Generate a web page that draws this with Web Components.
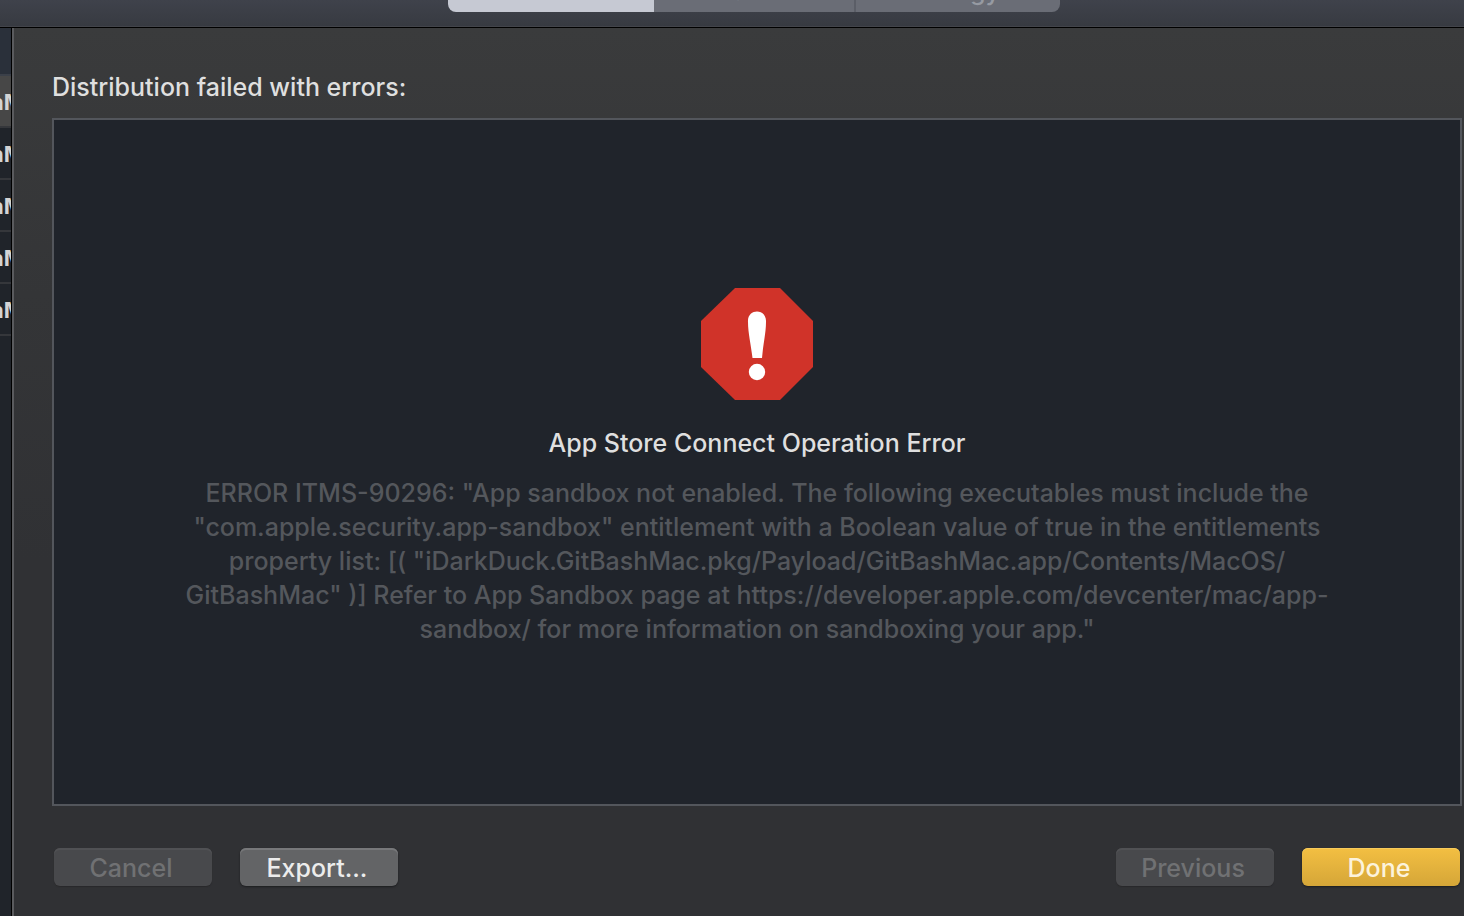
<!DOCTYPE html>
<html lang="en">
<head>
<meta charset="utf-8">
<title>Organizer</title>
<style>
  html, body { margin: 0; }
  body { background: #303134; color: #dfdfdf; font: 500 25px/34px Inter, "Liberation Sans", sans-serif; }
</style>
</head>
<body>
<organizer-window></organizer-window>
<script>
  const define = (name, html) => customElements.define(name, class extends HTMLElement {
    constructor() {
      super();
      const t = document.createElement('template');
      t.innerHTML = html;
      this.attachShadow({ mode: 'open' }).append(t.content.cloneNode(true));
    }
  });

  customElements.define('push-button', class extends HTMLElement {
    connectedCallback() {
      const root = this.attachShadow({ mode: 'open' });
      root.innerHTML = `
        <style>
          :host { display: block; }
          button {
            display: block; width: 158px; height: 38px; padding: 2px 4px 0 0; border: 0; border-radius: 6px;
            font: inherit; line-height: 36px; color: #ececec;
            background: #636466;
            box-shadow: inset 0 2px 0 #77787a, 0 1px 2px #1c1d1f;
          }
          button:disabled { color: #707173; background: #48494c; box-shadow: inset 0 2px 0 #505154, 0 1px 1px #29292b; }
          :host([primary]) button {
            color: #fcf3dc; background: linear-gradient(#f3bf42, #d5a638);
            box-shadow: inset 0 1px 0 #f7cb5b, 0 1px 2px #1c1d1f;
          }
        </style>
        <button type="button"><slot></slot></button>`;
      root.querySelector('button').disabled = this.hasAttribute('disabled');
    }
  });

  define('segmented-tabs', `
    <style>
      :host { display: flex; width: 612px; height: 44px; flex: none; border-radius: 8px; overflow: hidden; }
      button {
        flex: 1; padding: 9px 0 7px; border: 0;
        font: inherit; line-height: 28px; color: #969aa2; background: #6a6d76;
      }
      button.side { flex: none; width: 206px; }
      button.selected { color: #a9abb3; background: #c6c9d3; }
      button.divided { border-left: 2px solid #5b5e67; }
    </style>
    <button type="button" class="side selected">Archives</button>
    <button type="button">Crashes</button>
    <button type="button" class="side divided">Energy</button>`);

  define('window-toolbar', `
    <style>
      :host {
        display: flex; box-sizing: border-box; height: 28px; padding: 0 0 14px; overflow: hidden;
        justify-content: center; align-items: flex-end;
        background: linear-gradient(#3f424b, #373a41); border-bottom: 1px solid #000;
        box-shadow: inset 0 -1px 0 #42444a;
      }
      segmented-tabs { margin: 0 0 1px 44px; }
    </style>
    <segmented-tabs></segmented-tabs>`);

  define('archive-row', `
    <style>
      :host {
        display: block; box-sizing: border-box; height: 52px; border-bottom: 2px solid #35373b; overflow: hidden;
        font-weight: 700; font-size: 22px; line-height: 52px; text-indent: -10px; white-space: nowrap; color: #d4d4d4;
      }
      :host([selected]) { background: #474747; }
    </style>
    <slot></slot>`);

  define('archive-list', `
    <style>
      :host { display: block; width: 11px; flex: none; overflow: hidden; background: #20242a; border-right: 1px solid #000; }
      header { height: 46px; background: #2a303a; border-bottom: 2px solid #3b4049; }
    </style>
    <header></header>
    <archive-row selected>hM</archive-row>
    <archive-row>hM</archive-row>
    <archive-row>hM</archive-row>
    <archive-row>hM</archive-row>
    <archive-row>hM</archive-row>`);

  define('error-report', `
    <style>
      :host {
        display: flex; flex: 1; flex-direction: column; align-items: center; justify-content: center;
        padding-top: 10px; text-align: center; background: #20242b; border: 2px solid #53565c;
      }
      svg { display: block; width: 112px; height: 112px; }
      h2 { margin: 26px 0 16px; font: inherit; }
      p { margin: 0; color: #54575c; }
    </style>
    <svg viewBox="0 0 112 112" role="img" aria-label="Error">
      <path fill="#d03329" d="M34 0H79L112 33V79L79 112H34L0 79V33Z"/>
      <path fill="#fff" d="M47 34C46 20 66 20 65 34C65 45 62 57 61 70H51.500C50 57 47 45 47 34Z"/>
      <circle fill="#fff" cx="56" cy="84" r="8.200"/>
    </svg>
    <h2><slot name="title"></slot></h2>
    <p><slot></slot></p>`);

  define('distribution-sheet', `
    <style>
      :host {
        display: flex; flex: 1; flex-direction: column; box-sizing: border-box;
        padding: 42px 2px 30px 38px; border-left: 2px solid #5a5b5e;
        background: linear-gradient(#3a3b3c, #343537 30%, #303134 60%, #303134);
      }
      h1 { margin: 0 0 14px; font: inherit; }
      footer { display: flex; gap: 28px; margin: 42px 2px 0; }
      .spacer { flex: 1; }
    </style>
    <h1>Distribution failed with errors:</h1>
    <error-report>
      <span slot="title">App Store Connect Operation Error</span>
      ERROR ITMS-90296: "App sandbox not enabled. The following executables must include the<br>
      "com.apple.security.app-sandbox" entitlement with a Boolean value of true in the entitlements<br>
      property list: [( "iDarkDuck.GitBashMac.pkg/Payload/GitBashMac.app/Contents/MacOS/<br>
      GitBashMac" )] Refer to App Sandbox page at https://developer.apple.com/devcenter/mac/app-<br>
      sandbox/ for more information on sandboxing your app."
    </error-report>
    <footer>
      <push-button disabled>Cancel</push-button>
      <push-button>Export...</push-button>
      <div class="spacer"></div>
      <push-button disabled>Previous</push-button>
      <push-button primary>Done</push-button>
    </footer>`);

  define('organizer-window', `
    <style>
      :host { display: flex; flex-direction: column; min-height: 100vh; }
      main { display: flex; flex: 1; }
    </style>
    <window-toolbar></window-toolbar>
    <main>
      <archive-list></archive-list>
      <distribution-sheet></distribution-sheet>
    </main>`);
</script>
</body>
</html>
